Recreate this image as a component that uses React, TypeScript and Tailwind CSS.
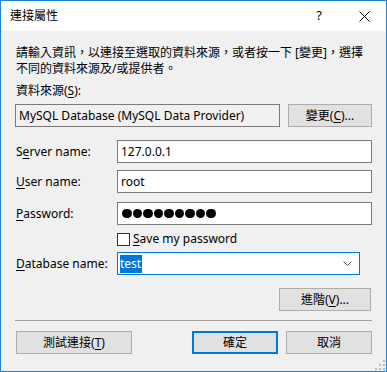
import React from "react";

const font = { fontFamily: '"Noto Sans", "Noto Sans CJK TC", sans-serif' };

function U({ children }: { children: React.ReactNode }) {
  return <span className="underline underline-offset-2">{children}</span>;
}

function Btn({ children, className = "" }: { children: React.ReactNode; className?: string }) {
  return (
    <div
      className={
        "flex h-[23px] items-center justify-center border border-[#adadad] bg-[#e1e1e1] text-[12px] text-black " +
        className
      }
    >
      {children}
    </div>
  );
}

function Row({ label, children }: { label: React.ReactNode; children: React.ReactNode }) {
  return (
    <div className="flex h-[23px] items-center">
      <div className="w-[102px] pl-[1px] text-[12px]">{label}</div>
      {children}
    </div>
  );
}

export default function App() {
  return (
    <div
      className="relative flex h-[372px] w-[387px] flex-col border border-[#1883d7] bg-[#f0f0f0] text-black"
      style={font}
    >
      {/* title bar */}
      <div className="flex h-[30px] shrink-0 items-center bg-white pl-[9px]">
        <div className="text-[12px]">連接屬性</div>
        <div className="ml-auto w-[46px] text-center text-[13px]">?</div>
        <div className="flex w-[44px] items-center justify-center">
          <svg width="11" height="11" viewBox="0 0 11 11">
            <path d="M0.5 0.5 L10.5 10.5 M10.5 0.5 L0.5 10.5" stroke="#000" strokeWidth="1" />
          </svg>
        </div>
      </div>

      <div className="flex flex-col px-[14px]">
        <div className="mt-[14px] pl-[1px] text-[12px] leading-[16px]">
          請輸入資訊，以連接至選取的資料來源，或者按一下 [變更]，選擇
          <br />
          不同的資料來源及/或提供者。
        </div>
        <div className="mt-[6px] pl-[1px] text-[12px] leading-[16px]">
          資料來源(<U>S</U>):
        </div>
        <div className="mt-[5px] flex gap-[8px]">
          <div className="flex h-[23px] w-[265px] items-center border border-[#7a7a7a] bg-[#f0f0f0] pl-[3px] text-[12px]">
            MySQL Database (MySQL Data Provider)
          </div>
          <Btn className="w-[84px]">
            變更(<U>C</U>)...
          </Btn>
        </div>

        <div className="mt-[13px] flex flex-col gap-[7px]">
          <Row
            label={
              <>
                S<U>e</U>rver name:
              </>
            }
          >
            <div className="flex h-[23px] w-[255px] items-center border border-[#7a7a7a] bg-white pl-[3px] text-[12px]">
              127.0.0.1
            </div>
          </Row>
          <Row
            label={
              <>
                <U>U</U>ser name:
              </>
            }
          >
            <div className="flex h-[23px] w-[255px] items-center border border-[#7a7a7a] bg-white pl-[3px] text-[12px]">
              root
            </div>
          </Row>
          <div className="mt-[2px]">
            <Row
              label={
                <>
                  <U>P</U>assword:
                </>
              }
            >
              <div className="flex h-[23px] w-[255px] items-center gap-[1px] border border-[#7a7a7a] bg-white pl-[4px]">
                {Array.from({ length: 9 }).map((_, i) => (
                  <span key={i} className="block h-[9.5px] w-[9.5px] rounded-full bg-black" />
                ))}
              </div>
            </Row>
          </div>
        </div>

        <div className="mt-[7px] flex h-[14px] items-center pl-[102px]">
          <div className="h-[13px] w-[13px] border border-[#333] bg-white" />
          <div className="ml-[3px] text-[12px]">
            <U>S</U>ave my password
          </div>
        </div>

        <div className="mt-[6px]">
          <Row
            label={
              <>
                <U>D</U>atabase name:
              </>
            }
          >
            <div className="flex h-[23px] w-[243px] items-center border border-[#0078d7] bg-white pl-[2px] text-[12px]">
              <span className="bg-[#0078d7] pr-[1px] text-white">test</span>
              <svg className="ml-auto mr-[7px]" width="9" height="5" viewBox="0 0 9 5">
                <path d="M0.5 0.5 L4.5 4.5 L8.5 0.5" stroke="#555" strokeWidth="1" fill="none" />
              </svg>
            </div>
          </Row>
        </div>

        <div className="mt-[13px] flex justify-end pr-[1px]">
          <Btn className="w-[92px]">
            進階(<U>V</U>)...
          </Btn>
        </div>

        <div className="mt-[9px] h-[1px] bg-[#a0a0a0]" />

        <div className="mt-[10px] flex">
          <Btn className="ml-[1px] w-[116px]">
            測試連接(<U>T</U>)
          </Btn>
          <div className="ml-auto flex h-[23px] w-[86px] items-center justify-center border-2 border-[#0078d7] bg-[#e1e1e1] text-[12px]">
            確定
          </div>
          <Btn className="ml-[8px] w-[86px]">取消</Btn>
        </div>
      </div>

      <svg className="absolute bottom-[1px] right-[1px]" width="10" height="10" viewBox="0 0 10 10">
        <g fill="#bcbcbc">
          <rect x="8" y="0" width="2" height="2" />
          <rect x="4" y="4" width="2" height="2" />
          <rect x="8" y="4" width="2" height="2" />
          <rect x="0" y="8" width="2" height="2" />
          <rect x="4" y="8" width="2" height="2" />
          <rect x="8" y="8" width="2" height="2" />
        </g>
      </svg>
    </div>
  );
}
